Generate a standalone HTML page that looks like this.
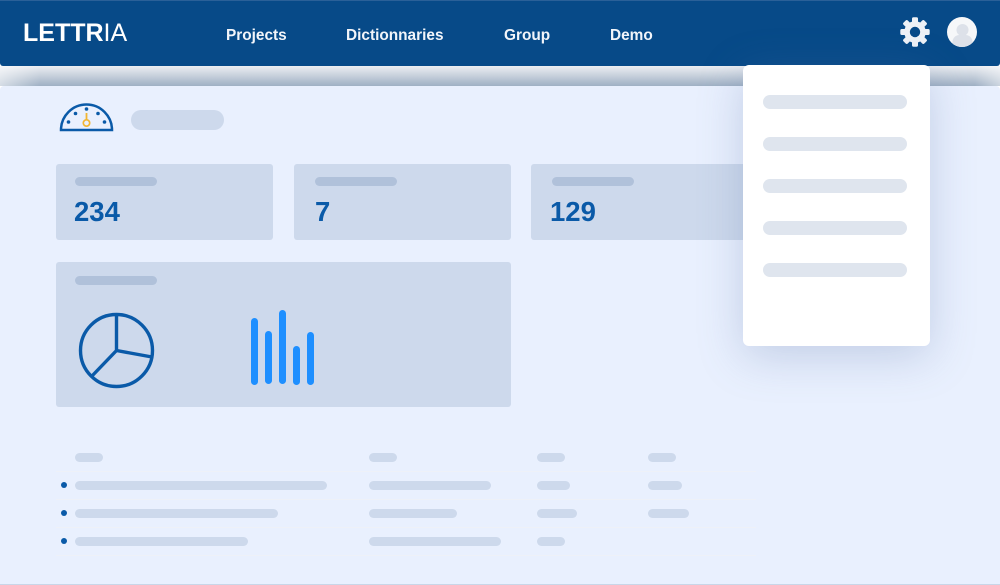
<!DOCTYPE html>
<html><head><meta charset="utf-8"><style>
html,body{margin:0;padding:0;width:1000px;height:585px;overflow:hidden;background:#fff}
body{position:relative;font-family:"Liberation Sans",sans-serif}
div{position:absolute;box-sizing:border-box}
.nav{left:0;top:0;width:1000px;height:66px;background:#074a88;border-top:1px solid #2a6098;border-radius:0 0 3px 3px}
.sh{left:0;top:66px;width:1000px;height:20px;background:linear-gradient(#eceef2,#9fb0c4)}
.shl{left:0;top:66px;width:40px;height:20px;background:linear-gradient(90deg,rgba(255,255,255,.55),rgba(255,255,255,0))}
.shr{left:975px;top:66px;width:25px;height:20px;background:linear-gradient(270deg,rgba(255,255,255,.45),rgba(255,255,255,0))}
.panel{left:0;top:86px;width:1000px;height:498px;background:#e9f0fe;border-radius:4px 4px 0 0}
.line{left:0;top:584px;width:1000px;height:1px;background:#c9d6e8}
.l{top:27px;color:#f2f5fa;font-size:15.4px;font-weight:bold;line-height:18px;white-space:nowrap}
.card{background:#cdd9ec;border-radius:3px}
.t{background:#b0c1da;height:9px;border-radius:5px}
.n{color:#0a5aa8;font-size:27.5px;font-weight:bold;line-height:30px;top:197px}
.b{background:#cdd9ec;height:9px;border-radius:5px}
.m{background:#dfe5ee;height:14px;border-radius:7px;left:763px;width:144px}
.d{background:#0a5aa8;width:6px;height:6px;border-radius:50%;left:61px}
.r{left:56px;width:700px;height:1px;background:#eef1f8}
.drop{left:743px;top:65px;width:187px;height:281px;background:#fff;border-radius:6px;box-shadow:0 10px 45px rgba(90,115,165,.28)}
</style></head><body>
<div class="sh"></div>
<div class="shl"></div>
<div class="shr"></div>
<div class="panel"></div>
<div class="line"></div>
<div class="nav"></div>
<div style="left:23px;top:18px;color:#fff;font-size:25px;line-height:30px;font-weight:bold;white-space:nowrap">LETTR<span style="font-weight:normal">IA</span></div>
<div class="l" style="left:226px">Projects</div>
<div class="l" style="left:346px">Dictionnaries</div>
<div class="l" style="left:504px">Group</div>
<div class="l" style="left:610px">Demo</div>
<svg style="position:absolute;left:900px;top:17px" width="30" height="30" viewBox="0 0 30 30"><g fill="#eef1f6"><circle cx="15" cy="15" r="10.800"/><rect x="12" y="0.300" width="6" height="6" rx="1.500"/><rect x="12" y="0.300" width="6" height="6" rx="1.500" transform="rotate(45 15 15)"/><rect x="12" y="0.300" width="6" height="6" rx="1.500" transform="rotate(90 15 15)"/><rect x="12" y="0.300" width="6" height="6" rx="1.500" transform="rotate(135 15 15)"/><rect x="12" y="0.300" width="6" height="6" rx="1.500" transform="rotate(180 15 15)"/><rect x="12" y="0.300" width="6" height="6" rx="1.500" transform="rotate(225 15 15)"/><rect x="12" y="0.300" width="6" height="6" rx="1.500" transform="rotate(270 15 15)"/><rect x="12" y="0.300" width="6" height="6" rx="1.500" transform="rotate(315 15 15)"/></g><circle cx="15" cy="15" r="5.200" fill="#074a88"/></svg>
<svg style="position:absolute;left:947px;top:17px" width="30" height="30" viewBox="0 0 30 30"><defs><clipPath id="c"><circle cx="15" cy="15" r="15"/></clipPath></defs><circle cx="15" cy="15" r="15" fill="#f6f7f9"/><g clip-path="url(#c)" fill="#dde1e9"><circle cx="15.500" cy="13" r="6"/><rect x="5.500" y="18" width="20" height="14" rx="7"/></g></svg>

<svg style="position:absolute;left:58px;top:102px" width="56" height="32" viewBox="0 0 56 32"><path d="M3 28 A25.500 25.500 0 0 1 54 28 Z" fill="none" stroke="#0a5aa8" stroke-width="2.500"/><g fill="#0a5aa8"><circle cx="10.500" cy="20" r="1.800"/><circle cx="17.500" cy="11.500" r="1.800"/><circle cx="28.500" cy="7" r="1.800"/><circle cx="40" cy="11.500" r="1.800"/><circle cx="46.500" cy="20" r="1.800"/></g><path d="M28.500 11V18" stroke="#f2b632" stroke-width="1.800"/><circle cx="28.500" cy="21" r="3.200" fill="none" stroke="#f2b632" stroke-width="1.700"/></svg>
<div class="b" style="left:131px;top:110px;width:93px;height:20px;border-radius:10px"></div>

<div class="card" style="left:56px;top:164px;width:217px;height:76px"></div>
<div class="card" style="left:294px;top:164px;width:217px;height:76px"></div>
<div class="card" style="left:531px;top:164px;width:230px;height:76px"></div>
<div class="t" style="left:75px;top:177px;width:82px"></div>
<div class="t" style="left:315px;top:177px;width:82px"></div>
<div class="t" style="left:552px;top:177px;width:82px"></div>
<div class="n" style="left:74px">234</div>
<div class="n" style="left:315px">7</div>
<div class="n" style="left:550px">129</div>

<div class="card" style="left:56px;top:262px;width:455px;height:145px"></div>
<div class="t" style="left:75px;top:276px;width:82px"></div>
<svg style="position:absolute;left:76px;top:310px" width="80" height="80" viewBox="0 0 80 80"><circle cx="40.500" cy="40.500" r="36" fill="none" stroke="#0a5aa8" stroke-width="3.400"/><path d="M40.500 4.500V40.500L76 47M40.500 40.500L15.500 66.500" fill="none" stroke="#0a5aa8" stroke-width="3.400"/></svg>
<svg style="position:absolute;left:248px;top:308px" width="70" height="80" viewBox="0 0 70 80" fill="#1e8fff"><rect x="3" y="10" width="7" height="67" rx="3.500"/><rect x="17" y="23" width="7" height="53" rx="3.500"/><rect x="31" y="2" width="7" height="74" rx="3.500"/><rect x="45" y="38" width="7" height="39" rx="3.500"/><rect x="59" y="24" width="7" height="53" rx="3.500"/></svg>

<div class="b" style="left:75px;top:453px;width:28px"></div>
<div class="b" style="left:369px;top:453px;width:28px"></div>
<div class="b" style="left:537px;top:453px;width:28px"></div>
<div class="b" style="left:648px;top:453px;width:28px"></div>
<div class="r" style="top:471px"></div>
<div class="d" style="top:482px"></div>
<div class="b" style="left:75px;top:481px;width:252px"></div>
<div class="b" style="left:369px;top:481px;width:122px"></div>
<div class="b" style="left:537px;top:481px;width:33px"></div>
<div class="b" style="left:648px;top:481px;width:34px"></div>
<div class="r" style="top:499px"></div>
<div class="d" style="top:510px"></div>
<div class="b" style="left:75px;top:509px;width:203px"></div>
<div class="b" style="left:369px;top:509px;width:88px"></div>
<div class="b" style="left:537px;top:509px;width:40px"></div>
<div class="b" style="left:648px;top:509px;width:41px"></div>
<div class="r" style="top:527px"></div>
<div class="d" style="top:538px"></div>
<div class="b" style="left:75px;top:537px;width:173px"></div>
<div class="b" style="left:369px;top:537px;width:132px"></div>
<div class="b" style="left:537px;top:537px;width:28px"></div>
<div class="r" style="top:555px"></div>

<div class="drop"></div>
<div class="m" style="top:95px"></div>
<div class="m" style="top:137px"></div>
<div class="m" style="top:179px"></div>
<div class="m" style="top:221px"></div>
<div class="m" style="top:263px"></div>
</body></html>
